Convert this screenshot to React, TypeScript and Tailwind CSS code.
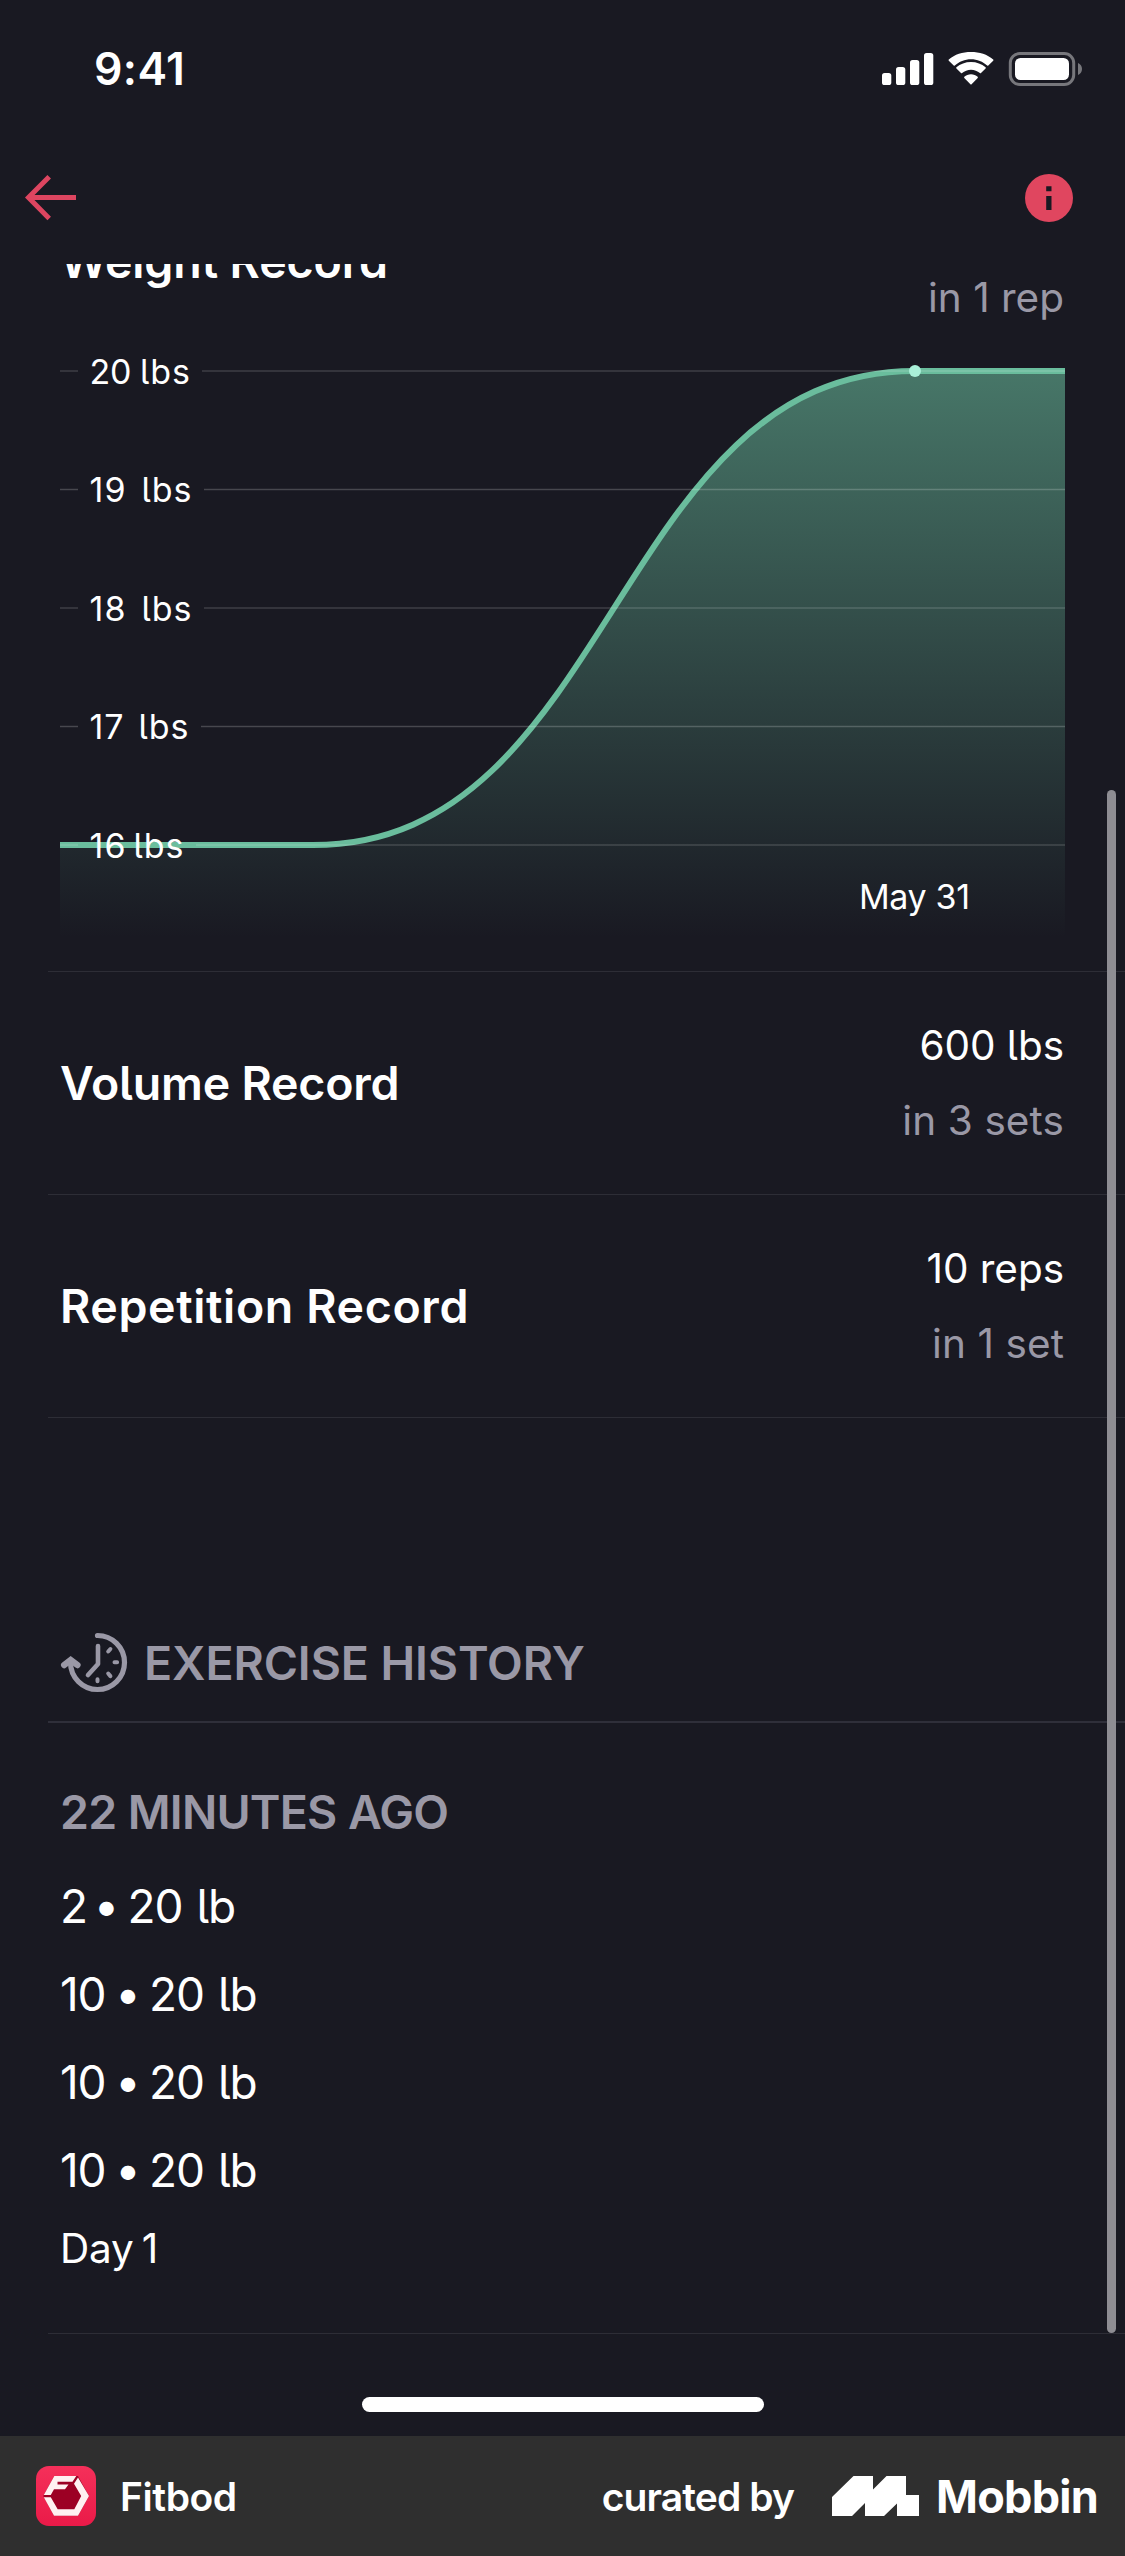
const gridLines = [
  { y: 371, value: "20", valueWidth: 42, unitX: 140, lineX: 202, opacity: 0.16 },
  { y: 489.5, value: "19", valueWidth: 36, unitX: 141.5, lineX: 204, opacity: 0.2 },
  { y: 608, value: "18", valueWidth: 36, unitX: 141.5, lineX: 204, opacity: 0.16 },
  { y: 726.5, value: "17", valueWidth: 34, unitX: 138.5, lineX: 201, opacity: 0.2 },
  { y: 845, value: "16", valueWidth: 36, unitX: 133.5, lineX: 196, opacity: 0.16 },
];

const records = [
  { title: "Volume Record", titleClass: "tracking-[-0.2px]", value: "600 lbs", detail: "in 3 sets" },
  { title: "Repetition Record", titleClass: "tracking-[0.62px]", value: "10 reps", detail: "in 1 set" },
];

const sets = [
  { reps: "2", bulletClass: "-ml-[5px]" },
  { reps: "10", bulletClass: "-ml-[2px]" },
  { reps: "10", bulletClass: "-ml-[2px]" },
  { reps: "10", bulletClass: "-ml-[2px]" },
];

function StatusBar() {
  return (
    <div className="flex h-[138px] items-center justify-between pl-[94px] pr-[40px] text-white">
      <span className="pt-[1px] text-[44.5px] font-semibold tracking-[0.4px] [font-feature-settings:'cv05'_0]">9:41</span>
      <svg width="205" height="40" viewBox="880 49 205 40" fill="#fff">
        <rect x="882" y="73" width="9.3" height="12" rx="2.6" />
        <rect x="896" y="67" width="9.3" height="18" rx="2.6" />
        <rect x="910" y="60" width="9.3" height="25" rx="2.6" />
        <rect x="924" y="53" width="9.3" height="32" rx="2.6" />
        <path d="M971 59.2c6.200 0 11.900 2.400 16.200 6.300.3.300.8.300 1.100 0l4.900-4.700c.4-.4.400-.9 0-1.200C987.300 54.200 979.500 52 971 52s-16.300 2.200-22.200 7.600c-.4.300-.4.800 0 1.200l4.900 4.700c.3.300.8.300 1.100 0 4.300-3.900 10-6.300 16.200-6.300z" />
        <path d="M971 69.800c3.400 0 6.500 1.300 8.900 3.300.3.300.8.300 1.100 0l4.600-4.600c.3-.3.300-.9 0-1.200-3.900-3.400-9-5.400-14.600-5.400s-10.700 2-14.600 5.400c-.3.300-.3.900 0 1.200l4.600 4.600c.3.300.8.300 1.100 0 2.400-2 5.500-3.300 8.900-3.300z" />
        <path d="M977.700 77.900c.3-.3.300-.9 0-1.200-1.800-1.500-4.200-2.500-6.700-2.500s-4.900 1-6.700 2.500c-.3.300-.3.900 0 1.200l6.100 6.400c.3.400.9.400 1.200 0z" />
        <rect x="1010.300" y="53.500" width="63.400" height="31" rx="9.500" fill="none" stroke="#77777c" strokeWidth="3" />
        <rect x="1015" y="58" width="54" height="22" rx="5.500" />
        <path d="M1078 63v12c2.400-1 4-3.300 4-6s-1.600-5-4-6z" fill="#77777c" />
      </svg>
    </div>
  );
}

function NavBar() {
  return (
    <div className="flex h-[126px] items-center justify-between pb-[6px] pl-[20px] pr-[50px]">
      <svg width="60" height="60" viewBox="20 168 60 60" fill="none" stroke="#dd4560" strokeWidth="5">
        <path d="M76 197.600H28M49.200 176.800L28.500 197.600l20.700 20.800" />
      </svg>
      <svg width="52" height="52" viewBox="0 0 52 52">
        <circle cx="26" cy="26" r="24" fill="#e0465f" />
        <path d="M23.200 14.300h5.300v5h-5.300zM23.200 24h5.300v14h-5.300z" fill="#191922" />
      </svg>
    </div>
  );
}

function WeightChart() {
  return (
    <svg className="block" width="1125" height="620" viewBox="0 351 1125 620">
      <defs>
        <linearGradient id="fill" gradientUnits="userSpaceOnUse" x1="0" y1="371" x2="0" y2="938">
          <stop offset="0" stopColor="#6bc09f" stopOpacity="0.56" />
          <stop offset="1" stopColor="#6bc09f" stopOpacity="0" />
        </linearGradient>
      </defs>
      <path d="M60 845H313C614 845 614 371 915 371H1065V938H60z" fill="url(#fill)" />
      <path d="M60 845H313C614 845 614 371 915 371H1065" fill="none" stroke="#6abd9d" strokeWidth="6" />
      {gridLines.map((g) => (
        <g key={g.value}>
          <path d={`M60 ${g.y}H78M${g.lineX} ${g.y}H1065`} stroke="#fff" strokeOpacity={g.opacity} strokeWidth="1.5" />
          <text x="89.500" y={g.y + 12.500} fill="#fff" fontSize="34" textLength={g.valueWidth}>{g.value}</text>
          <text x={g.unitX} y={g.y + 12.500} fill="#fff" fontSize="34" textLength="50">lbs</text>
        </g>
      ))}
      <circle cx="915" cy="371" r="6" fill="#a9f0d8" />
      <text x="859" y="908.500" fill="#fff" fontSize="34" textLength="111">May 31</text>
    </svg>
  );
}

function HistoryIcon() {
  return (
    <svg width="76" height="76" viewBox="0 0 76 76" fill="none" stroke="#9a98a6" strokeLinecap="round" strokeLinejoin="round">
      <path d="M41.500 9.500A27 27 0 1 1 14.500 36.500" strokeWidth="5.200" />
      <path d="M8.200 39L14.700 34L21.400 39" strokeWidth="6.400" strokeLinejoin="miter" />
      <path d="M42 20v18L32 49" strokeWidth="4.600" />
      <path d="M52.200 25.500l2.200-2.500M58.500 36.300h2.600M52.200 47.500l2.200 2.600M41.500 53.300v2" strokeWidth="4" />
    </svg>
  );
}

function FitbodLogo() {
  return (
    <svg width="60" height="60" viewBox="0 0 60 60">
      <defs>
        <linearGradient id="fitbod" x1="0" y1="0" x2="0" y2="1">
          <stop offset="0" stopColor="#f5305a" />
          <stop offset="1" stopColor="#ea1a48" />
        </linearGradient>
      </defs>
      <rect width="60" height="60" rx="13" fill="url(#fitbod)" />
      <path d="M18.300 10H42L53 30 42 49.700H18L7.300 30z" fill="#9c0024" />
      <path d="M18.300 10H40.300L36.500 15.800H21.500V18.500H32.500L29 23.300H18L14.800 29H7.800z" fill="#fff0f1" />
      <path d="M42 11.500L53 30 42 49.700H18L7.800 31.300H14.800L21.700 43.200H38.300L45.200 30 38 17.800z" fill="#fff0f1" />
    </svg>
  );
}

function Footer() {
  return (
    <div className="flex h-[120px] items-center justify-between bg-[#2f2f2f] pl-[36px] pr-[27px] text-white [font-feature-settings:'cv05'_0]">
      <div className="flex items-center gap-[24px]">
        <FitbodLogo />
        <span className="pt-[3px] text-[39px] font-semibold tracking-[-0.45px]">Fitbod</span>
      </div>
      <div className="flex items-center">
        <span className="pt-[3px] text-[39px] font-semibold tracking-[-0.9px]">curated by</span>
        <svg className="ml-[38px] mr-[17px]" width="87" height="40" viewBox="832 2476 87 40" fill="#fff">
          <path d="M832 2497l21.500-21H873v13.500L886.500 2476H906v19h13v21h-22v-12.500L884 2516h-19v-13l-13 13h-20z" />
        </svg>
        <span className="pt-[1px] text-[45px] font-bold tracking-[-0.75px]">Mobbin</span>
      </div>
    </div>
  );
}

export default function App() {
  return (
    <div className="relative flex h-[2556px] w-[1125px] flex-col overflow-hidden bg-[#191922] font-['Inter',sans-serif] [font-feature-settings:'cv05'_1]">
      <StatusBar />
      <NavBar />
      <main className="text-white">
        <div className="flex h-[87px] items-start justify-between overflow-hidden pl-[60px] pr-[61px]">
          <h2 className="-mt-[31px] text-[46.5px] font-semibold leading-[56px] tracking-[-0.13px]">Weight Record</h2>
          <span className="mt-[6px] text-[40.5px] leading-[56px] text-[#9a98a6]">in 1 rep</span>
        </div>
        <WeightChart />
        <div className="ml-[48px] border-b border-[#2d2d36]">
          {records.map((r) => (
            <div key={r.title} className="flex h-[223px] items-center justify-between border-t border-[#2d2d36] pl-[12px] pr-[61px]">
              <h2 className={`pt-[2px] text-[46.5px] font-semibold ${r.titleClass}`}>{r.title}</h2>
              <div className="flex flex-col text-right text-[40.5px] leading-[75px]">
                <span className="tracking-[-0.05px]">{r.value}</span>
                <span className="tracking-[0.1px] text-[#9a98a6]">{r.detail}</span>
              </div>
            </div>
          ))}
        </div>
        <section className="ml-[48px]">
          <div className="flex h-[305px] items-end border-b-2 border-[#2f2f3a] pb-[17px] pl-[8px] text-[#9a98a6]">
            <div className="flex h-[80px] items-center gap-[12px]">
              <HistoryIcon />
              <h2 className="text-[46.5px] font-semibold tracking-[-0.1px]">EXERCISE HISTORY</h2>
            </div>
          </div>
          <div className="flex h-[611px] flex-col border-b border-[#2d2d36] pl-[12px] pt-[45px]">
            <h3 className="mb-[6px] text-[46.5px] font-semibold leading-[88px] tracking-[-0.8px] text-[#9a98a6] [word-spacing:0.5px]">22 MINUTES AGO</h3>
            {sets.map((s, i) => (
              <p key={i} className="text-[46px] leading-[88px] tracking-[-1.2px]">
                {s.reps} <span className={`relative -top-[1px] -mr-[2.5px] ${s.bulletClass}`}>•</span>{" "}
                <span className="[word-spacing:2.5px]">20 lb</span>
              </p>
            ))}
            <p className="mt-[5px] text-[40.5px] leading-[60px] tracking-[-0.2px] [word-spacing:-3px]">Day 1</p>
          </div>
        </section>
      </main>
      <div className="mx-auto mt-[63px] h-[15px] w-[402px] rounded-full bg-white" />
      <div className="mt-auto">
        <Footer />
      </div>
      <div className="absolute right-[9px] top-[790px] h-[1543px] w-[9px] rounded-full bg-[#8e8d93]" />
    </div>
  );
}
